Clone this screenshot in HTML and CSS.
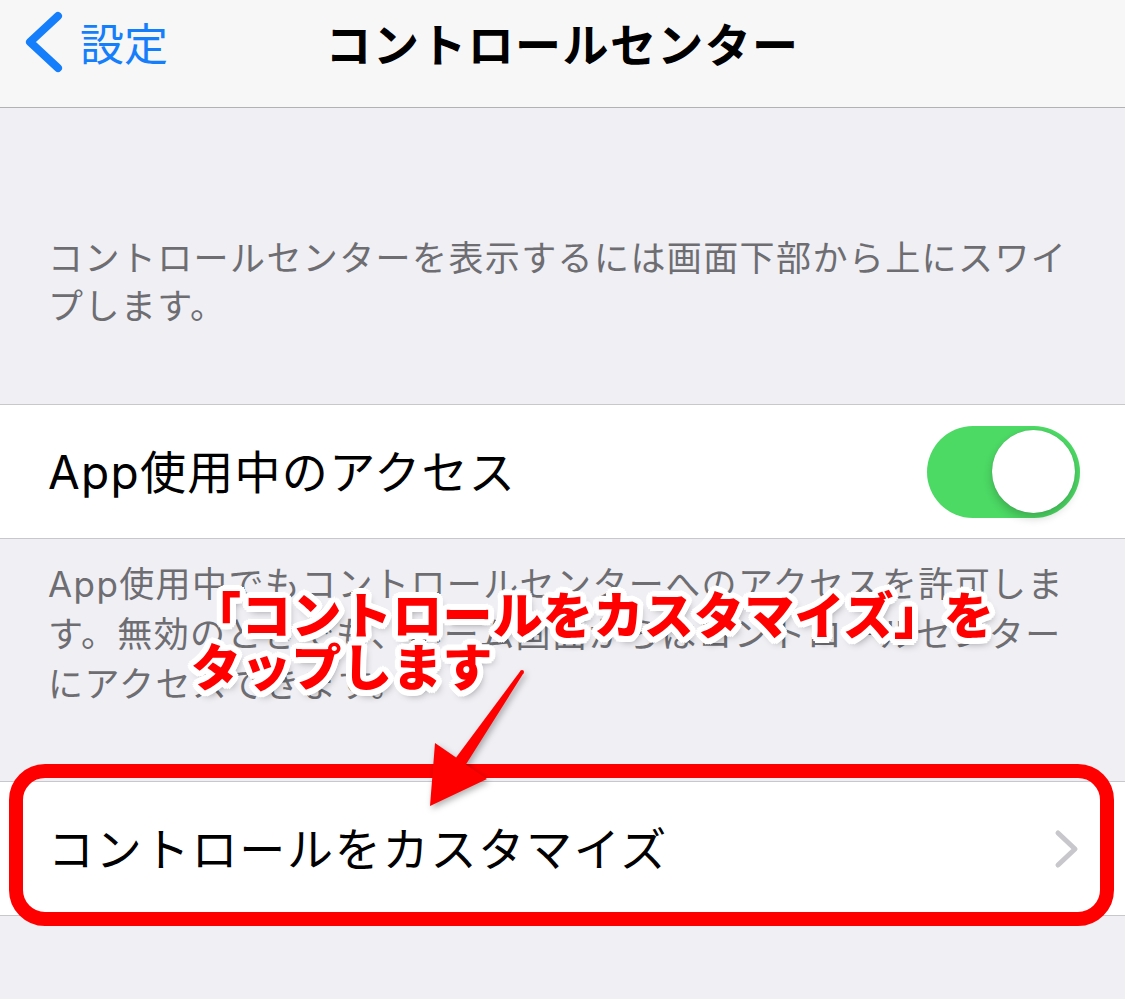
FILE: index.html
```html
<!DOCTYPE html>
<html lang="ja">
<head>
<meta charset="utf-8">
<title>コントロールセンター</title>
<link rel="stylesheet" href="styles.css">
</head>
<body>
<div class="screen">
  <header class="nav">
    <a class="back">
      <svg class="back-chevron" width="40" height="62" viewBox="0 0 40 62" aria-hidden="true">
        <polyline points="34,5 6,31 34,57" fill="none" stroke="#157efb" stroke-width="8" stroke-linecap="round" stroke-linejoin="round"/>
      </svg>
      <span class="back-label">設定</span>
    </a>
    <h1 class="title">コントロールセンター</h1>
    <span class="nav-spacer"></span>
  </header>

  <main class="content">
    <p class="group-text group-header">コントロールセンターを表示するには画面下部から上にスワイ<br>プします。</p>

    <div class="cell">
      <span class="cell-label">App使用中のアクセス</span>
      <span class="switch"><span class="knob"></span></span>
    </div>

    <p class="group-text group-footer">App使用中でもコントロールセンターへのアクセスを許可しま<br>す。無効のときでも、ホーム画面からはコントロールセンター<br>にアクセスできます。</p>

    <div class="cell">
      <span class="cell-label cell-label-wide">コントロールをカスタマイズ</span>
      <svg class="disclosure" width="26" height="40" viewBox="0 0 26 40" aria-hidden="true">
        <polyline points="4,4 21,20 4,36" fill="none" stroke="#c7c7cc" stroke-width="5" stroke-linecap="round" stroke-linejoin="round"/>
      </svg>
    </div>
  </main>

  <div class="highlight"></div>

  <svg class="arrow" width="1125" height="999" viewBox="0 0 1125 999" aria-hidden="true">
    <polygon points="520.4,670.9 523.6,673.1 465.9,764.4 487,779 430,806 435,743 456.1,757.6" fill="#ff0000"/>
    <circle cx="522" cy="672" r="2" fill="#ff0000"/>
  </svg>

  <div class="callout">
    <div class="callout-line">「コントロールをカスタマイズ」を</div>
    <div class="callout-line">タップします</div>
  </div>
</div>
</body>
</html>
```

FILE: styles.css
```css
html, body {
  margin: 0;
  padding: 0;
}

body {
  background: #efeff4;
  font-family: "Inter", "Noto Sans CJK JP", sans-serif;
  color: #000;
}

.screen {
  position: relative;
  width: 1125px;
  height: 999px;
  overflow: hidden;
  background: #efeff4;
}

/* Navigation bar */
.nav {
  height: 108px;
  box-sizing: border-box;
  padding-bottom: 24px;
  background: #f7f7f8;
  border-bottom: 1px solid #b2b2b2;
  display: grid;
  grid-template-columns: 1fr auto 1fr;
  align-items: center;
}

.back {
  display: flex;
  align-items: center;
  gap: 16px;
  padding-left: 24px;
  color: #157efb;
  text-decoration: none;
}

.back-chevron {
  display: block;
}

.back-label {
  font-family: "Noto Sans CJK JP", sans-serif;
  font-size: 44px;
  line-height: 44px;
  color: #157efb;
}

.title {
  margin: 0;
  font-family: "Noto Sans CJK JP", sans-serif;
  font-size: 46px;
  line-height: 46px;
  font-weight: 700;
  letter-spacing: 1.4px;
  color: #000;
  white-space: nowrap;
}

/* Content */
.content {
  display: flex;
  flex-direction: column;
}

.group-text {
  margin: 0;
  padding-left: 48px;
  font-family: "Inter", "Noto Sans CJK JP", sans-serif;
  font-size: 35px;
  line-height: 48px;
  letter-spacing: 1.4px;
  color: #6d6d72;
  white-space: nowrap;
}

.group-header {
  padding-top: 126px;
  padding-bottom: 74px;
}

.group-footer {
  padding-top: 20px;
  padding-bottom: 72px;
  line-height: 50px;
}

.cell {
  height: 135px;
  box-sizing: border-box;
  background: #fff;
  border-top: 1px solid #c8c7cc;
  border-bottom: 1px solid #c8c7cc;
  display: flex;
  align-items: center;
  justify-content: space-between;
  padding: 0 45px 0 48px;
}

.cell-label {
  font-family: "Inter", "Noto Sans CJK JP", sans-serif;
  font-size: 46px;
  letter-spacing: 1.3px;
  line-height: 1;
  white-space: nowrap;
}

.cell-label-wide {
  letter-spacing: 1.8px;
}

.switch {
  position: relative;
  width: 153px;
  height: 92px;
  border-radius: 46px;
  background: #4cd964;
  display: flex;
  align-items: center;
  justify-content: flex-end;
  padding: 0 5px;
  box-sizing: border-box;
}

.knob {
  width: 83px;
  height: 83px;
  border-radius: 50%;
  background: #fff;
  box-shadow: 0 5px 10px rgba(0, 0, 0, 0.2), 0 0 1px rgba(0, 0, 0, 0.2);
}

.disclosure {
  display: block;
}

/* Annotations */
.highlight {
  position: absolute;
  left: 9px;
  top: 764px;
  width: 1105px;
  height: 162px;
  box-sizing: border-box;
  border: 14px solid #ff0000;
  border-radius: 36px;
}

.arrow {
  position: absolute;
  left: 0;
  top: 0;
  filter: drop-shadow(2px 3px 3px rgba(0, 0, 0, 0.3));
}

.callout {
  position: absolute;
  left: 191px;
  top: 586px;
  font-family: "Noto Sans CJK JP", sans-serif;
  font-size: 50px;
  line-height: 52px;
  font-weight: 900;
  letter-spacing: 0.3px;
  color: #ff0000;
  white-space: nowrap;
  text-shadow:
    6px 0 0 #fff, 5.5px 2.3px 0 #fff, 4.2px 4.2px 0 #fff, 2.3px 5.5px 0 #fff,
    0 6px 0 #fff, -2.3px 5.5px 0 #fff, -4.2px 4.2px 0 #fff, -5.5px 2.3px 0 #fff,
    -6px 0 0 #fff, -5.5px -2.3px 0 #fff, -4.2px -4.2px 0 #fff, -2.3px -5.5px 0 #fff,
    0 -6px 0 #fff, 2.3px -5.5px 0 #fff, 4.2px -4.2px 0 #fff, 5.5px -2.3px 0 #fff,
    3px 3px 0 #fff, -3px 3px 0 #fff, 3px -3px 0 #fff, -3px -3px 0 #fff,
    3px 5px 9px rgba(0, 0, 0, 0.45);
}

.callout-line {
  display: block;
}
```
